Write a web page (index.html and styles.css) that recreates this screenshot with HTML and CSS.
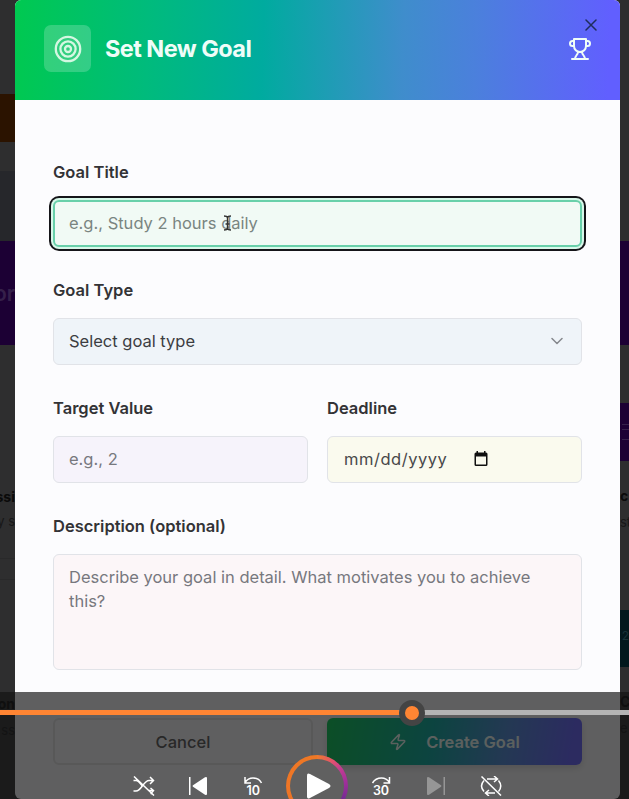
FILE: index.html
```html
<!DOCTYPE html>
<html lang="en">
<head>
<meta charset="utf-8">
<title>Set New Goal</title>
<link rel="stylesheet" href="styles.css">
</head>
<body>
<div class="scene">
  <div class="strip strip-left">
    <div class="s-plain h94"></div>
    <div class="s-orange h48"></div>
    <div class="s-plain h29"></div>
    <div class="s-slate h70"></div>
    <div class="s-purple h104"><span class="big">or</span></div>
    <div class="s-plain h141"><span></span></div>
    <div class="s-plain s-text"><b>ssi</b><span>y s</span><i></i><i></i></div>
    <div class="s-plain s-text s-foot"><b>on</b><span>ss</span></div>
  </div>
  <main class="dialog">
    <header class="head">
      <div class="badge">
        <svg width="28" height="28" viewBox="0 0 28 28" fill="none" stroke="currentColor" stroke-width="2.300"><circle cx="14" cy="14" r="12.200"/><circle cx="14" cy="14" r="7.600"/><circle cx="14" cy="14" r="3"/></svg>
      </div>
      <h1>Set New Goal</h1>
      <svg class="trophy" width="24" height="24" viewBox="0 0 24 24" fill="none" stroke="currentColor" stroke-width="2" stroke-linecap="round" stroke-linejoin="round"><path d="M6 9H4.500a2.500 2.500 0 0 1 0-5H6M18 9h1.500a2.500 2.500 0 0 0 0-5H18M4 22h16M10 14.660C10 18 7 18.500 7 22M14 14.660C14 18 17 18.500 17 22M18 2H6v7a6 6 0 0 0 12 0V2Z"/></svg>
      <svg class="close" width="12" height="12" viewBox="0 0 12 12" fill="none" stroke="currentColor" stroke-width="1.500" stroke-linecap="round"><path d="M1 1l10 10M11 1L1 11"/></svg>
    </header>
    <div class="form">
      <section class="field">
        <label>Goal Title</label>
        <div class="box title-box">e.g., Study 2 hours daily
          <svg class="ibeam" width="9" height="16" viewBox="0 0 9 16" fill="none" stroke="currentColor" stroke-width="1.400"><path d="M1 1q3 0 3.500 1.500Q5 1 8 1M4.500 2v12M1 15q3 0 3.500-1.500Q5 15 8 15M2.500 9h4"/></svg>
        </div>
      </section>
      <section class="field">
        <label>Goal Type</label>
        <div class="box type-box">Select goal type
          <svg width="12" height="8" viewBox="0 0 12 8" fill="none" stroke="currentColor" stroke-width="1.500" stroke-linecap="round" stroke-linejoin="round"><path d="M1 1.500l5 5 5-5"/></svg>
        </div>
      </section>
      <div class="pair">
        <section class="field">
          <label>Target Value</label>
          <div class="box value-box">e.g., 2</div>
        </section>
        <section class="field">
          <label>Deadline</label>
          <div class="box date-box"><span>mm/dd/yyyy</span>
            <svg width="14" height="16" viewBox="0 0 14 16"><path fill="currentColor" fill-rule="evenodd" d="M2.500 0H4v1.500h6V0h1.500v1.500h.5q1.500 0 1.500 1.500v10.500q0 1.500-1.500 1.500H2Q.5 15 .5 13.500V3Q.5 1.500 2 1.500h.5zM2 5.500v8h10v-8z"/></svg>
          </div>
        </section>
      </div>
      <section class="field">
        <label>Description (optional)</label>
        <div class="box desc-box">Describe your goal in detail. What motivates you to achieve this?</div>
      </section>
      <div class="actions">
        <div class="btn cancel">Cancel</div>
        <div class="btn create">
          <svg width="18" height="18" viewBox="0 0 24 24" fill="none" stroke="currentColor" stroke-width="2" stroke-linecap="round" stroke-linejoin="round"><path d="M4 14a1 1 0 0 1-.780-1.630l9.900-10.200a.5.5 0 0 1 .860.460l-1.920 6.020A1 1 0 0 0 13 10h7a1 1 0 0 1 .780 1.630l-9.900 10.200a.5.5 0 0 1-.860-.460l1.920-6.020A1 1 0 0 0 11 14z"/></svg>
          Create Goal
        </div>
      </div>
    </div>
  </main>
  <div class="strip strip-right">
    <div class="s-plain h241"></div>
    <div class="s-purple h104"></div>
    <div class="s-plain h58"></div>
    <div class="s-purple s-lines h58"><i></i><i></i><i></i></div>
    <div class="s-plain s-text h149"><b>c</b><span>st</span></div>
    <div class="s-teal h57"><span>2</span></div>
    <div class="s-plain s-text s-foot"><b>C</b><span>e</span></div>
  </div>
</div>

<div class="player">
  <div class="seek"><div class="played"></div><div class="knob"></div></div>
  <div class="controls">
    <svg width="22" height="20" viewBox="0 0 22 20" fill="none" stroke="currentColor" stroke-width="1.500"><path d="M.5 4.500H3c3 0 4.500 3.500 6.500 6M.5 15H3c5.500 0 7.500-10.500 13-10.500h4M17 1l3.500 3.500L17 8M15.500 14.500h5M17.500 12l3 2.500-3 3.500M1 .500l20 19"/></svg>
    <svg width="20" height="20" viewBox="0 0 20 20" fill="currentColor"><path d="M1 1h1.500v18H1zM5 9.200L17 1.300q2-1 2 1v15.400q0 2-2 1L5 10.800q-1-.8 0-1.600z"/></svg>
    <svg class="skip" width="20" height="20" viewBox="0 0 20 20"><path d="M2 1v6h6M2 6.500Q5 2 10 2q6 0 8.500 5" fill="none" stroke="currentColor" stroke-width="1.500"/><text x="10.300" y="19">10</text></svg>
    <div class="play"><svg width="24" height="26" viewBox="0 0 24 26" fill="currentColor"><path d="M0 2.500Q0-.5 3 1l19 10q3 2 0 4L3 25q-3 1.500-3-1.500z"/></svg></div>
    <svg class="skip" width="20" height="20" viewBox="0 0 20 20"><path d="M18.500 1v6h-6M18.500 6.500Q15.500 2 10.500 2q-6 0-9 5" fill="none" stroke="currentColor" stroke-width="1.500"/><text x="10" y="19">30</text></svg>
    <svg class="dim" width="20" height="20" viewBox="0 0 20 20" fill="currentColor"><path d="M17.500 1H19v18h-1.500zM15 9.200L3 1.300q-2-1-2 1v15.400q0 2 2 1l12-7.900q1-.8 0-1.600z"/></svg>
    <svg width="22" height="20" viewBox="0 0 22 20" fill="none" stroke="currentColor" stroke-width="1.500"><path d="M7 3h10M14 0l3.500 3L14 6M15 17H6M9 14l-3.500 3L9 20M4 4.500q-5 5.500 0 11M18.500 4.500q4.500 5.500 0 11M1.500.5l19.500 19"/></svg>
  </div>
</div>
</body>
</html>
```
FILE: styles.css
```css
* { box-sizing: border-box; }
body {
  margin: 0;
  width: 629px;
  height: 799px;
  overflow: hidden;
  position: relative;
  background: #2e2e2f;
  font-family: Inter, "Liberation Sans", sans-serif;
}
.scene { display: flex; height: 799px; }

/* dimmed page on both sides of the dialog */
.strip { overflow: hidden; display: flex; flex-direction: column; color: #0a0a0a; white-space: nowrap; }
.strip > div { flex: none; overflow: hidden; }
.strip-left { width: 15px; }
.strip-right { width: 9px; }
.h29 { height: 29px; }
.h48 { height: 48px; }
.h57 { height: 57px; }
.h58 { height: 58px; }
.h70 { height: 70px; }
.h94 { height: 94px; }
.h104 { height: 104px; }
.h141 { height: 141px; }
.h149 { height: 149px; }
.h241 { height: 241px; }
.s-plain { background: #2e2e2f; }
.s-orange { background: #2b1300; }
.s-slate { background: #26272b; }
.s-purple { background: #1c0034; }
.s-teal { background: #02181d; color: #173238; font-size: 12px; padding-top: 18px; text-align: right; }
.s-text { font-size: 14px; }
.s-text b, .s-text span { display: block; line-height: 26px; }
.s-text span { font-size: 13px; color: #171718; }
.strip-left .s-text { height: 205px; display: flex; flex-direction: column; align-items: flex-end; }
.strip-left .s-text b { line-height: 22px; }
.strip-left .s-text i { width: 15px; flex: none; height: 1px; margin-top: 24px; background: #29292a; }
.strip-left .s-text i + i { margin-top: 20px; }
.strip-left .s-foot { height: 110px; }
.strip-left .s-foot b { line-height: 26px; }
.strip-right .s-text { padding-top: 22px; }
.strip-right .s-foot { height: 132px; padding-top: 22px; }
.big { display: block; float: right; font-size: 21px; font-weight: 600; line-height: 106px; color: #35204a; }
.s-lines { padding-top: 21px; }
.s-lines i { display: block; height: 1px; margin: 0 0 4px 2px; background: #35204a; }
.s-lines i + i + i { margin-top: 9px; }

.dialog {
  flex: none;
  width: 605px;
  height: 799px;
  overflow: hidden;
  border-radius: 6px;
  background: #fcfcfe;
  color: #333336;
}
.head {
  position: relative;
  display: flex;
  align-items: center;
  height: 100px;
  padding: 0 28px 3px 29px;
  color: #effdf8;
  background: linear-gradient(92deg, #00c950 0%, #00bb7c 22%, #00ab9f 41%, #3f8dcc 64%, #4b80dc 76%, #615fff 98%);
}
.badge {
  display: flex;
  align-items: center;
  justify-content: center;
  width: 47px;
  height: 47px;
  border-radius: 7px;
  color: #d5f7e2;
  background: rgba(255, 255, 255, .2);
}
.head h1 { margin: 0 auto 0 14px; font-size: 23.500px; font-weight: 650; letter-spacing: -.56px; line-height: 30px; }
.close { position: absolute; top: 19px; right: 23px; color: #1f2d5c; }
.form { padding: 60px 38px 0 38px; }
.field { margin-bottom: 32px; }
.field label { display: block; margin-bottom: 16px; font-size: 16.500px; font-weight: 600; line-height: 24px; }
.box {
  display: flex;
  align-items: center;
  height: 47px;
  margin-bottom: -1px;
  padding: 0 15px 1px;
  border: 1px solid #e1e3e8;
  border-radius: 6px;
  font-size: 16.500px;
  line-height: 24px;
  color: #77787e;
}
.title-box {
  position: relative;
  border: 2px solid #69d0aa;
  padding: 0 14px 1px;
  color: #7a8581;
  background: #f1faf5;
  box-shadow: 0 0 0 2px #d8f8ea, 0 0 0 4px #151519;
}
.ibeam { position: absolute; left: 168px; top: 13px; color: #333; }
.type-box { justify-content: space-between; padding-right: 18px; background: #eff4f9; color: #3c3d42; }
.type-box svg { color: #85888d; }
.pair { display: grid; grid-template-columns: 255px 255px; gap: 19px; }
.value-box { background: #f6f3fb; }
.date-box { gap: 27px; padding-left: 16px; background: #fafaee; color: #48484a; letter-spacing: .53px; }
.date-box svg { color: #101010; }
.desc-box { display: block; height: 116px; padding: 10px 30px 0 15px; margin-bottom: 0; background: #fcf6f8; }
.actions { display: grid; grid-template-columns: 260px 255px; gap: 14px; margin-top: 48px; }
.btn {
  display: flex;
  align-items: center;
  justify-content: center;
  height: 47px;
  border-radius: 6px;
  font-size: 16.500px;
  font-weight: 500;
}
.cancel { border: 2px solid #e5e5e7; color: #555; }
.create {
  gap: 19px;
  color: #effdf8;
  font-weight: 600;
  background: linear-gradient(100deg, #00c950, #00aa9c 40%, #4a86d8 70%, #615fff 95%);
  box-shadow: 0 3px 7px rgba(0, 0, 0, .15);
}

.player {
  position: absolute;
  left: 0;
  top: 692px;
  width: 629px;
  height: 107px;
  overflow: hidden;
  color: #fff;
  background: rgba(18, 18, 18, .67);
}
.seek { display: flex; align-items: center; width: 629px; height: 26px; margin-top: 8px; background: linear-gradient(#b4b4b4, #b4b4b4) 0 10px / 100% 5px no-repeat; }
.played { width: 399px; height: 5px; margin-top: -1px; background: #ff8533; }
.knob { width: 26px; height: 26px; border: 6.500px solid #444; border-radius: 50%; background: #ff8533; }
.controls { display: flex; align-items: center; margin-top: 28px; padding-left: 133px; height: 64px; }
.controls > svg { flex: none; }
.controls > svg:nth-child(2) { margin-left: 33px; }
.controls > svg:nth-child(3) { margin-left: 35px; }
.play {
  display: flex;
  align-items: center;
  justify-content: center;
  flex: none;
  width: 62px;
  height: 62px;
  margin: 0 23px;
  padding-left: 3px;
  border: 4.500px solid transparent;
  border-radius: 50%;
  background: linear-gradient(#606060, #606060) padding-box, conic-gradient(from 0deg, #ee7b2c, #e2516f 9%, #c23c91 15%, #a4309b 22%, #6e2b91 34%, #6e2b91 48%, #ef7426 60%, #ee7825) border-box;
}
.controls > svg:nth-child(6) { margin-left: 35px; }
.controls > svg:nth-child(7) { margin-left: 34px; }
.skip text { fill: currentColor; text-anchor: middle; font: 600 12.500px Inter, "Liberation Sans", sans-serif; }
.dim { color: #969696; }
```
